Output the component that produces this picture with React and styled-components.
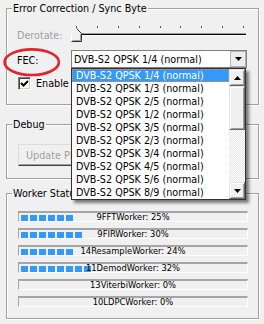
import React from 'react'
import styled, { createGlobalStyle } from 'styled-components'

const GlobalStyle = createGlobalStyle`
  html, body {
    margin: 0;
    padding: 0;
    background: #f0f0f0;
  }
  body {
    font-family: "DejaVu Sans Condensed", "DejaVu Sans", sans-serif;
    font-size: 10.7px;
    color: #000;
  }
`

const workers = [
    { name: '9FFTWorker', pct: 25 },
    { name: '9FIRWorker', pct: 30 },
    { name: '14ResampleWorker', pct: 24 },
    { name: '11DemodWorker', pct: 32 },
    { name: '13ViterbiWorker', pct: 0 },
    { name: '10LDPCWorker', pct: 0 },
]

const fecModes = ['1/4', '1/3', '2/5', '1/2', '3/5', '2/3', '3/4', '4/5', '5/6', '8/9']

const Window = styled.div`
  width: 264px;
  height: 324px;
  box-sizing: border-box;
  padding: 8px 5px 0 6px;
  display: flex;
  flex-direction: column;
  overflow: hidden;
`

const Group = styled.section`
  margin-top: ${p => p.$gap || 0}px;
  height: ${p => p.$h}px;
  flex: none;
  box-sizing: border-box;
  border: 1px solid #a0a0a0;
  box-shadow: inset 1px 1px 0 #fff, 1px 1px 0 #fff;
  padding: 0 10px;
`

const Title = styled.h3`
  margin: -7px 0 0 -5px;
  padding: 0 1px;
  width: fit-content;
  background: #f0f0f0;
  font: inherit;
  line-height: 13px;
  white-space: nowrap;
`

const Row = styled.div`
  display: grid;
  grid-template-columns: 54px 175px;
  align-items: center;
  margin-top: ${p => p.$gap}px;
`

const Label = styled.div`
  position: relative;
  align-self: stretch;
  display: flex;
  align-items: center;
  padding-top: 2px;
  color: ${p => (p.$disabled ? '#a0a0a0' : '#000')};
`

const Circle = styled.svg`
  position: absolute;
  left: -14px;
  top: -2px;
  overflow: visible;
`

const Slider = styled.div`
  position: relative;
  height: 17px;
`

const Ticks = styled.div`
  display: flex;
  justify-content: space-between;
  padding: 0 2px 0 5px;
  height: 2px;
`

const Tick = styled.span`
  width: 1px;
  height: 2px;
  background: #505050;
`

const Track = styled.div`
  margin-top: 5px;
  height: 1px;
  background: #000;
  border-top: 1px solid #a0a0a0;
  border-bottom: 1px solid #fff;
`

const Thumb = styled.svg`
  position: absolute;
  left: 0;
  top: 2px;
`

const Combo = styled.div`
  position: relative;
  width: 176px;
  height: 18px;
  box-sizing: border-box;
  border: 1px solid #7f7f7f;
  background: #fff;
  display: flex;
  align-items: center;
`

const ComboText = styled.span`
  flex: 1;
  padding-left: 2px;
  line-height: 16px;
  padding-top: 1px;
  white-space: nowrap;
`

const ComboButton = styled.div`
  width: 16px;
  height: 16px;
  box-sizing: border-box;
  border: 1px solid #b5b5b5;
  background: #ececec;
  display: flex;
  align-items: center;
  justify-content: center;
`

const DropList = styled.div`
  position: absolute;
  left: -1px;
  top: 17px;
  width: 175px;
  height: 132px;
  box-sizing: border-box;
  border: 1px solid #333;
  background: #fff;
  box-shadow: 3px 3px 3px rgba(0, 0, 0, 0.5);
  display: flex;
  z-index: 5;
`

const Items = styled.div`
  flex: 1;
  display: flex;
  flex-direction: column;
`

const Item = styled.div`
  height: 13px;
  line-height: 13px;
  padding: 0 4px;
  white-space: nowrap;
  box-sizing: border-box;
  background: ${p => (p.$active ? '#3399ff' : 'transparent')};
  color: ${p => (p.$active ? '#fff' : '#000')};
  outline: ${p => (p.$active ? '1px dotted #f08c3c' : 'none')};
  outline-offset: -1px;
`

const ScrollBar = styled.div`
  width: 16px;
  display: flex;
  flex-direction: column;
`

const ScrollButton = styled.div`
  height: ${p => p.$h}px;
  flex: none;
  box-sizing: border-box;
  background: #f0f0f0;
  border: 1px solid;
  border-color: #e3e3e3 #696969 #696969 #e3e3e3;
  box-shadow: inset 1px 1px 0 #fff, inset -1px -1px 0 #a0a0a0;
  display: flex;
  align-items: center;
  justify-content: center;
`

const ScrollTrack = styled.div`
  flex: 1;
  background: repeating-conic-gradient(#fff 0 25%, #e6e6e6 0 50%) 0 0 / 2px 2px;
`

const CheckRow = styled.div`
  display: flex;
  align-items: center;
  gap: 5px;
  margin: 9px 0 0 1px;
`

const CheckBox = styled.div`
  width: 13px;
  height: 13px;
  box-sizing: border-box;
  border: 1px solid;
  border-color: #808080 #fff #fff #808080;
  box-shadow: inset 1px 1px 0 #404040, inset -1px -1px 0 #d4d0c8;
  background: #fff;
  display: flex;
  align-items: center;
  justify-content: center;
`

const Button = styled.button`
  display: block;
  margin: 13px 0 0 1px;
  width: 130px;
  height: 22px;
  box-sizing: border-box;
  font: inherit;
  color: #a0a0a0;
  text-align: left;
  padding: 0 0 0 7px;
  background: #f0f0f0;
  border: 1px solid;
  border-color: #dcdcdc #404040 #404040 #dcdcdc;
  box-shadow: inset -1px -1px 0 #a0a0a0;
`

const Bars = styled.div`
  display: flex;
  flex-direction: column;
  gap: 6px;
  margin: 11px 0 0 1px;
`

const Bar = styled.div`
  width: 230px;
  height: 11px;
  box-sizing: border-box;
  border-style: solid;
  border-width: 2px 1px 1px 1px;
  border-color: #a5a5a5 #fff #fff #a5a5a5;
  padding: 0 2px;
  display: grid;
  & > * {
    grid-area: 1 / 1;
  }
`

const Blocks = styled.div`
  display: flex;
  gap: 2px;
  margin-top: 2px;
`

const Block = styled.span`
  width: 7px;
  height: 6px;
  background: #3399ff;
`

const BarText = styled.span`
  justify-self: center;
  font-size: 9.3px;
  line-height: 8px;
  white-space: nowrap;
`

const Arrow = ({ up }) => (
    <svg width="7" height="4" viewBox="0 0 7 4">
        <path d={up ? 'M3.5 0 L7 4 L0 4 Z' : 'M0 0 L7 0 L3.5 4 Z'} fill="#000" />
    </svg>
)

function FecSelect() {
    return (
        <Combo>
            <ComboText>DVB-S2 QPSK 1/4 (normal)</ComboText>
            <ComboButton>
                <Arrow />
            </ComboButton>
            <DropList>
                <Items>
                    {fecModes.map((m, i) => (
                        <Item key={m} $active={i === 0}>
                            DVB-S2 QPSK {m} (normal)
                        </Item>
                    ))}
                </Items>
                <ScrollBar>
                    <ScrollButton $h={17}>
                        <Arrow up />
                    </ScrollButton>
                    <ScrollButton $h={44} />
                    <ScrollTrack />
                    <ScrollButton $h={17}>
                        <Arrow />
                    </ScrollButton>
                </ScrollBar>
            </DropList>
        </Combo>
    )
}

export default function App() {
    return (
        <>
            <GlobalStyle />
            <Window>
                <Group $h={97}>
                    <Title>Error Correction / Sync Byte</Title>
                    <Row $gap={11}>
                        <Label $disabled>Derotate:</Label>
                        <Slider>
                            <Ticks>
                                {Array.from({ length: 9 }).map((_, i) => (
                                    <Tick key={i} />
                                ))}
                            </Ticks>
                            <Track />
                            <Thumb width="11" height="14" viewBox="0 0 11 14">
                                <path d="M5.5 0.5 L10.5 5.5 L10.5 13.5 L0.5 13.5 L0.5 5.5 Z" fill="#f0f0f0" />
                                <path d="M0.5 13 L0.5 5.5 L5.5 0.5" fill="none" stroke="#fff" />
                                <path d="M5.5 0.5 L10.5 5.5 L10.5 13.5 L0.5 13.5" fill="none" stroke="#333" />
                                <path d="M9.5 6 L9.5 12.5 L1.5 12.5" fill="none" stroke="#a0a0a0" />
                            </Thumb>
                        </Slider>
                    </Row>
                    <Row $gap={7}>
                        <Label>
                            FEC:
                            <Circle width="58" height="29" viewBox="0 0 58 29">
                                <ellipse cx="28.7" cy="14.2" rx="27.2" ry="12.8" fill="none" stroke="#e3242b" strokeWidth="2.6" />
                            </Circle>
                        </Label>
                        <FecSelect />
                    </Row>
                    <CheckRow>
                        <CheckBox>
                            <svg width="9" height="9" viewBox="0 0 9 9">
                                <path d="M1 4 L3.5 6.5 L8 2" fill="none" stroke="#000" strokeWidth="2" />
                            </svg>
                        </CheckBox>
                        <span>Enable</span>
                    </CheckRow>
                </Group>
                <Group $gap={19} $h={55}>
                    <Title>Debug</Title>
                    <Button disabled>Update Plots</Button>
                </Group>
                <Group $gap={14} $h={126}>
                    <Title>Worker Status</Title>
                    <Bars>
                        {workers.map(w => (
                            <Bar key={w.name}>
                                <Blocks>
                                    {Array.from({ length: Math.floor(w.pct / 4) }).map((_, i) => (
                                        <Block key={i} />
                                    ))}
                                </Blocks>
                                <BarText>
                                    {w.name}: {w.pct}%
                                </BarText>
                            </Bar>
                        ))}
                    </Bars>
                </Group>
            </Window>
        </>
    )
}
